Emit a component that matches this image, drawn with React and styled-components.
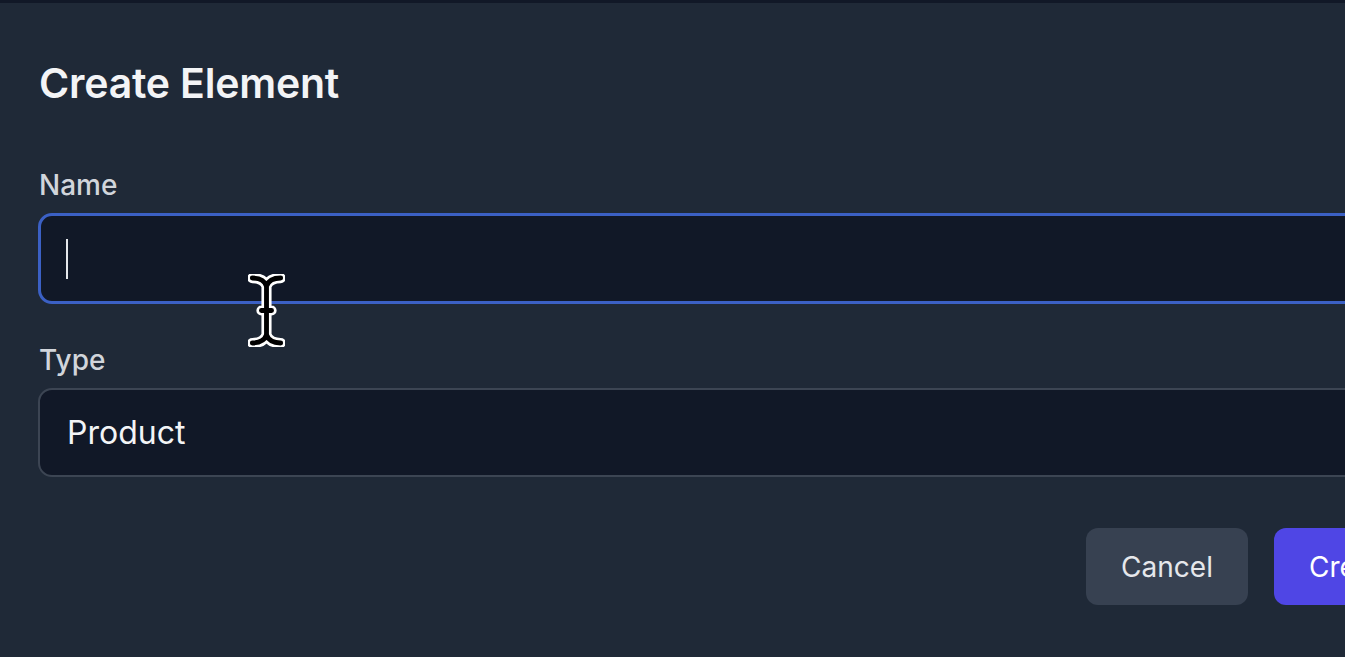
import React from "react";
import styled, { createGlobalStyle } from "styled-components";

const GlobalStyle = createGlobalStyle`
  html, body {
    margin: 0;
    background: #1f2937;
    overflow: hidden;
  }
  body {
    font-family: Inter, "Noto Sans", "Liberation Sans", sans-serif;
  }
`;

const cursorPath =
  "M2 2 C5 2 8 3 9 6 C10 3 13 2 16 2 M9 6 V30 M2 34 C5 34 8 33 9 30 C10 33 13 34 16 34 M6.5 18 H11.5";

function App() {
  return (
    <>
      <GlobalStyle />
      <Page>
        <Dialog>
          <Title>Create Element</Title>

          <Field>
            <Label htmlFor="name">Name</Label>
            <InputWrap>
              <NameInput id="name" type="text" defaultValue="" />
              <Caret />
            </InputWrap>
          </Field>

          <Field $gap={39}>
            <Label htmlFor="type">Type</Label>
            <TypeSelect id="type" defaultValue="Product">
              <option>Product</option>
              <option>Service</option>
              <option>Component</option>
            </TypeSelect>
          </Field>

          <Actions>
            <Button type="button">Cancel</Button>
            <Button type="button" $primary>
              Create
            </Button>
          </Actions>
        </Dialog>

        {/* mouse pointer sitting over the form */}
        <MouseCursor viewBox="0 0 18 36" width="37" height="73">
          <g fill="none" strokeLinecap="round" strokeLinejoin="round">
            <path d={cursorPath} stroke="#fff" strokeWidth="5" />
            <path d={cursorPath} stroke="#000" strokeWidth="2.4" />
          </g>
        </MouseCursor>
      </Page>
    </>
  );
}

export default App;

const Page = styled.div`
  position: relative;
  width: 100vw;
  height: 100vh;
  overflow: hidden;
`;

const Dialog = styled.div`
  box-sizing: border-box;
  width: 1471px;
  border-top: 3px solid #111827;
  background: #1f2937;
  padding: 55px 39px 50px 38px;
  display: flex;
  flex-direction: column;
`;

const Title = styled.h2`
  margin: 0 0 60px 1px;
  font-size: 41px;
  line-height: 50px;
  font-weight: 600;
  color: #f3f4f6;
  letter-spacing: -0.2px;
`;

const Field = styled.div`
  display: flex;
  flex-direction: column;
  margin-top: ${(p) => p.$gap || 0}px;
`;

const Label = styled.label`
  font-size: 28px;
  line-height: 34px;
  font-weight: 500;
  color: #d1d5db;
  margin: 0 0 11px 1px;
`;

const InputWrap = styled.div`
  position: relative;
`;

const NameInput = styled.input`
  box-sizing: border-box;
  width: 100%;
  height: 91px;
  margin: 0;
  padding: 0 26px;
  border: 3px solid #3b60c4;
  border-radius: 14px;
  background: #111827;
  color: #f3f4f6;
  font-family: inherit;
  font-size: 32px;
  outline: none;
  caret-color: transparent;
`;

const Caret = styled.span`
  position: absolute;
  left: 28px;
  top: 26px;
  width: 2px;
  height: 40px;
  background: #e5e7eb;
`;

const TypeSelect = styled.select`
  box-sizing: border-box;
  width: 100%;
  height: 89px;
  margin: 0;
  padding: 0 27px;
  border: 2px solid #3c4553;
  border-radius: 14px;
  background: #111827;
  color: #f3f4f6;
  font-family: inherit;
  font-size: 32px;
  appearance: none;
  outline: none;
`;

const Actions = styled.div`
  display: flex;
  justify-content: flex-end;
  gap: 26px;
  margin-top: 51px;
`;

const Button = styled.button`
  height: 77px;
  padding: 0 35px;
  border: none;
  border-radius: 12px;
  background: ${(p) => (p.$primary ? "#4f46e5" : "#374151")};
  color: ${(p) => (p.$primary ? "#ffffff" : "#e5e7eb")};
  font-family: inherit;
  font-size: 28px;
  font-weight: 400;
  cursor: pointer;
`;

const MouseCursor = styled.svg`
  position: absolute;
  left: 248px;
  top: 274px;
  pointer-events: none;
`;
